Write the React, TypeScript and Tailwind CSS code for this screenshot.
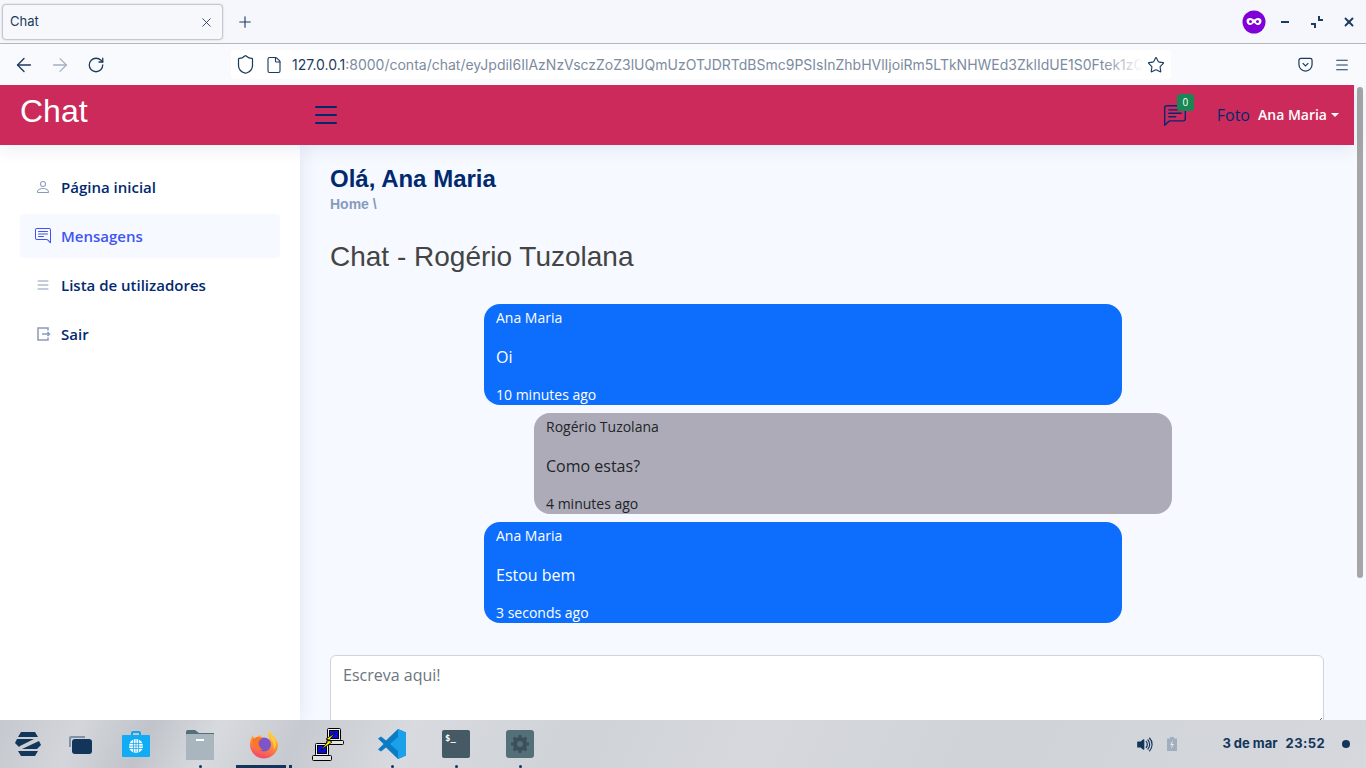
import { ArrowLeft, ArrowRight, RotateCw, Shield, File, Star, Menu, Plus, X } from "lucide-react";
import { BsPerson, BsChatRightText, BsChatLeftText, BsList, BsVolumeUpFill } from "react-icons/bs";
import type { ComponentType, ReactNode } from "react";

function SairIcon({ className, size }: { className?: string; size?: number }) {
  return (
    <svg className={className} width={size} height={size} viewBox="0 0 16 16" fill="none" stroke="currentColor" strokeWidth="1.500">
      <path d="M13 4.500V2H3v12h10v-2.500" />
      <path d="M7 8h7.500M12.500 6l2 2-2 2" />
    </svg>
  );
}

const sideItems: { label: string; icon: ComponentType<{ className?: string; size?: number }>; active?: boolean }[] = [
  { label: "Página inicial", icon: BsPerson },
  { label: "Mensagens", icon: BsChatRightText, active: true },
  { label: "Lista de utilizadores", icon: BsList },
  { label: "Sair", icon: SairIcon },
];

const messages = [
  { name: "Ana Maria", text: "Oi", time: "10 minutes ago", mine: true },
  { name: "Rogério Tuzolana", text: "Como estas?", time: "4 minutes ago", mine: false },
  { name: "Ana Maria", text: "Estou bem", time: "3 seconds ago", mine: true },
];

function BrowserChrome() {
  return (
    <div className="font-['Inter',sans-serif] text-[#1c3b5e]">
      <div className="flex h-[44px] items-start border-b border-[#b4b6ba] bg-[#f5f7fc] pl-[2px] pt-[4px]">
        <div className="flex h-[36px] w-[221px] items-center justify-between rounded-[4px] border border-[#c6c8cd] bg-[#f6f8fc] pl-[7px] pr-[8px] shadow-[0_0_2px_rgba(0,0,0,0.2)]">
          <span className="text-[13px]">Chat</span>
          <X size={15} strokeWidth={1.4} />
        </div>
        <div className="ml-[13px] flex h-[36px] items-center">
          <Plus size={18} strokeWidth={1.5} />
        </div>
        <div className="ml-auto flex h-[36px] items-center pr-[10px]">
          <svg width="24" height="24" viewBox="0 0 24 24">
            <circle cx="12" cy="12" r="11.500" fill="#8000d7" />
            <path d="M4.500 11c0-2 1.500-3 3.500-3 2 0 3 1.500 4 1.500S14 8 16 8s3.500 1 3.500 3-1.500 4-3.500 4-3-2-4-2-2 2-4 2-3.500-2-3.500-4z" fill="#fff" />
            <circle cx="8.500" cy="11.500" r="1.500" fill="#8000d7" />
            <circle cx="15.500" cy="11.500" r="1.500" fill="#8000d7" />
          </svg>
          <div className="ml-[15px] h-[2px] w-[8px] bg-[#1c3b5e]" />
          <svg className="ml-[21px]" width="14" height="14" viewBox="0 0 14 14" fill="none" stroke="#1c3b5e" strokeWidth="2">
            <path d="M1 9h4v4M13 5H9V1" />
          </svg>
          <X className="ml-[18px]" size={14} strokeWidth={3.2} />
        </div>
      </div>
      <div className="flex h-[41px] items-center bg-[#f9fafe]">
        <div className="flex w-[231px] items-center pl-[13px]">
          <ArrowLeft size={22} strokeWidth={1.5} />
          <ArrowRight className="ml-[14px] text-[#a3b1c2]" size={22} strokeWidth={1.4} />
          <RotateCw className="ml-[16px]" size={18} strokeWidth={1.7} />
        </div>
        <div className="flex h-[29px] w-[940px] items-center rounded-[4px] bg-white pl-[4px] pr-[6px]">
          <Shield size={21} strokeWidth={1.4} />
          <File className="ml-[9px]" size={18} strokeWidth={1.5} />
          <div className="relative ml-[9px] min-w-0 flex-1 overflow-hidden whitespace-nowrap text-[14px]">
            <span>127.0.0.1</span>
            <span className="text-[#7c8ba0]">:8000/conta/chat/eyJpdiI6IlAzNzVsczZoZ3lUQmUzOTJDRTdBSmc9PSIsInZhbHVlIjoiRm5LTkNHWEd3ZklIdUE1S0Ftek1zQ</span>
            <div className="absolute inset-y-0 right-0 w-[40px] bg-gradient-to-r from-transparent to-white" />
          </div>
          <Star className="ml-[4px]" size={18} strokeWidth={1.5} />
        </div>
        <div className="ml-auto flex items-center pr-[16px]">
          <svg width="15" height="15" viewBox="0 0 16 16" fill="none" stroke="#1c3b5e" strokeWidth="1.300">
            <path d="M1 3.500a2 2 0 0 1 2-2h10a2 2 0 0 1 2 2V8A7 7 0 0 1 1 8z" />
            <path d="M5 6.500l3 3 3-3" />
          </svg>
          <Menu className="ml-[21px]" size={16} strokeWidth={1.6} />
        </div>
      </div>
    </div>
  );
}

function TopBar() {
  return (
    <header className="relative z-10 flex h-[60px] items-center bg-[#cb2a5b] font-['Open_Sans',sans-serif] shadow-[0_2px_20px_rgba(1,41,112,0.1)]">
      <div className="mb-[9px] w-[310px] pl-[20px] font-['Liberation_Sans',sans-serif] text-[32px] text-white">Chat</div>
      <BsList className="text-[#012970]" size={32} />
      <div className="ml-auto flex items-center pr-[15px]">
        <div className="relative mr-[31px] mt-[2px]">
          <BsChatLeftText className="text-[#012970]" size={22} />
          <span className="absolute -right-[8px] -top-[11px] flex h-[17px] w-[17px] items-center justify-center rounded-[3px] bg-[#198754] text-[10px] text-white">0</span>
        </div>
        <span className="-mt-[1px] text-[16px] text-[#012970]">Foto</span>
        <span className="-mt-[1px] ml-[8px] text-[14px] font-semibold text-white">Ana Maria</span>
        <span className="ml-[4px] h-0 w-0 border-x-[4px] border-t-[4px] border-x-transparent border-t-white" />
      </div>
    </header>
  );
}

function Sidebar() {
  return (
    <aside className="relative z-[5] flex w-[300px] shrink-0 flex-col gap-[5px] bg-white px-[20px] pt-[20px] font-['Open_Sans',sans-serif] shadow-[0_0_20px_rgba(1,41,112,0.1)]">
      {sideItems.map((item) => {
        const Icon = item.icon;
        return (
          <div
            key={item.label}
            className={`flex h-[44px] items-center rounded-[4px] pl-[15px] text-[15px] font-semibold ${
              item.active ? "bg-[#f6f9ff] text-[#4154f1]" : "text-[#012970]"
            }`}
          >
            <span className="flex w-[26px]">
              <Icon className={item.active ? "text-[#4154f1]" : "text-[#899bbd]"} size={16} />
            </span>
            {item.label}
          </div>
        );
      })}
    </aside>
  );
}

function Bubble({ name, text, time, mine }: { name: string; text: string; time: string; mine: boolean }) {
  return (
    <div
      className={`w-[638px] rounded-[16px] px-[12px] pt-[3px] ${
        mine ? "ml-[154px] bg-[#0d6efd] text-white" : "ml-[204px] bg-[#adabb8] text-[#212529]"
      }`}
    >
      <div className="text-[14px] leading-[21px]">{name}</div>
      <div className="mt-[17px] text-[16px] leading-[24px]">{text}</div>
      <div className="mt-[15px] text-[14px] leading-[21px]">{time}</div>
    </div>
  );
}

function Main() {
  return (
    <main className="min-w-0 flex-1 bg-[#f6f9ff] pl-[30px] pr-[30px] pt-[20px] font-['Open_Sans',sans-serif]">
      <h1 className="font-['Liberation_Sans',sans-serif] text-[24px] font-bold leading-[28px] text-[#012970]">Olá, Ana Maria</h1>
      <div className="mt-[1px] font-['Liberation_Sans',sans-serif] text-[14px] font-bold leading-[21px] text-[#899bbd]">Home \</div>
      <h2 className="mt-[25px] font-['Liberation_Sans',sans-serif] text-[28px] leading-[34px] text-[#444444]">Chat - Rogério Tuzolana</h2>
      <div className="mt-[30px] flex flex-col gap-[8px]">
        {messages.map((m, i) => (
          <Bubble key={i} {...m} />
        ))}
      </div>
      <textarea
        className="mt-[32px] block h-[72px] w-full rounded-[6px] border border-[#ced4da] bg-white px-[12px] pb-[6px] pt-[7px] text-[16px] leading-[24px] placeholder:text-[#6c757d]"
        placeholder="Escreva aqui!"
      />
    </main>
  );
}

function Slot({ children, dot, bar }: { children: ReactNode; dot?: boolean; bar?: boolean }) {
  return (
    <div className="relative flex h-[48px] w-[64px] items-center justify-center">
      {children}
      {dot && <span className="absolute bottom-0 left-[31px] h-[3px] w-[3px] rounded-full bg-[#12355b]" />}
      {bar && (
        <>
          <span className="absolute bottom-0 left-[4px] h-[3px] w-[50px] bg-[#12355b]" />
          <span className="absolute bottom-0 left-[57px] h-[3px] w-[3px] bg-[#12355b]" />
        </>
      )}
    </div>
  );
}

function Taskbar() {
  return (
    <footer className="relative z-20 flex h-[48px] shrink-0 items-center overflow-hidden bg-[#d1d4d9] bg-[linear-gradient(115deg,rgba(196,199,205,0.9)_0%,rgba(212,214,219,0.7)_6%,rgba(188,192,198,0.8)_11%,rgba(218,220,224,0.7)_16%,rgba(194,198,204,0.7)_22%,rgba(220,222,226,0.6)_30%,rgba(206,209,214,0.5)_42%,rgba(218,220,224,0.5)_55%,rgba(206,209,214,0.4)_72%,rgba(216,218,222,0.6)_100%)] font-['Inter',sans-serif] text-[#12355b]">
      <div className="flex w-[56px] items-center justify-center">
        <svg width="28" height="24" viewBox="0 0 28 24" fill="#12355b">
          <path d="M7 0h14l3 5H4z" />
          <path d="M3 7h17L6 14l-1 1-4-4z" />
          <path d="M25 9l2 4-4 4H8l17-8z" />
          <path d="M4 19h20l-3 5H7z" />
        </svg>
      </div>
      <div className="flex w-[48px] items-center justify-center">
        <svg width="24" height="20" viewBox="0 0 24 20">
          <path d="M1 13V4a2 2 0 0 1 2-2h14v2H4a1 1 0 0 0-1 1v8z" fill="#7f93a8" />
          <rect x="4" y="5" width="20" height="15" rx="3" fill="#12355b" />
        </svg>
      </div>
      <Slot>
        <svg width="28" height="28" viewBox="0 0 28 28">
          <path d="M9 6V3a2 2 0 0 1 2-2h6a2 2 0 0 1 2 2v3h-2V3h-6v3z" fill="#0fa3ea" />
          <rect y="5" width="28" height="22" rx="1" fill="#12acf5" />
          <circle cx="14" cy="16" r="7" fill="#fff" />
          <path d="M7 13.500h14M7 16h14M7 18.500h14M11.500 9v14M14 9v14M16.500 9v14" stroke="#12acf5" strokeWidth="0.800" />
        </svg>
      </Slot>
      <Slot dot>
        <svg width="28" height="31" viewBox="0 0 28 31">
          <path d="M0 3a2 2 0 0 1 2-2h7l4 3h15v4H0z" fill="#546e7a" />
          <rect y="5" width="28" height="26" rx="1" fill="#a9b6bd" />
          <rect x="10" y="10" width="8" height="2" fill="#fff" />
        </svg>
      </Slot>
      <Slot bar>
        <svg width="28" height="30" viewBox="0 0 28 30">
          <defs>
            <linearGradient id="ff" x1="0.7" y1="0" x2="0.4" y2="1">
              <stop offset="0" stopColor="#ffe14a" />
              <stop offset="0.45" stopColor="#ff9a2e" />
              <stop offset="1" stopColor="#f4476b" />
            </linearGradient>
          </defs>
          <path d="M18 0c1 4 8 7 10 15a14 14 0 0 1-28 1C0 12 1 9 3 6c0 2 1 3 2 4 1-2 3-3 5-4l3 3c2 0 4 1 6 3 1-4-2-8-1-12z" fill="url(#ff)" />
          <circle cx="14" cy="15.500" r="7" fill="#7d55c9" />
          <path d="M2 11c3-3 7-4 10-2l-3 3c-1 3 0 7 4 9-5 1-10-3-11-10z" fill="#ff7528" />
          <path d="M20 3c3 3 6 7 6 12 0 2-1 4-2 6 0-5-1-9-4-12 1-2 1-4 0-6z" fill="#ffc93c" />
        </svg>
      </Slot>
      <Slot>
        <svg width="32" height="33" viewBox="0 0 32 33" stroke="#000" strokeWidth="1">
          <rect x="15.500" y="0.500" width="13" height="12" rx="1" fill="#f2f2f2" />
          <rect x="17.500" y="2.500" width="9" height="8" fill="#0b0bd6" />
          <rect x="14.500" y="12.500" width="17" height="4" rx="1" fill="#e2e2e2" />
          <rect x="3.500" y="15.500" width="13" height="12" rx="1" fill="#f2f2f2" />
          <rect x="5.500" y="17.500" width="9" height="8" fill="#0b0bd6" />
          <rect x="0.500" y="27.500" width="19" height="5" rx="1" fill="#e2e2e2" />
          <path d="M23 5l-9 6 3 1L9 22l11-8-3-1.500z" fill="#ffee00" strokeWidth="0.800" />
        </svg>
      </Slot>
      <Slot dot>
        <svg width="28" height="30" viewBox="0 0 28 30">
          <path d="M20 0l8 3.500v23L20 30 8 18.500l-5 4-3-2 5.500-5.500L0 9.500l3-2 5 4z" fill="#0a7cc4" />
          <path d="M20 0l8 3.500v23L20 30zM20 8l-8 7 8 7z" fill="#1ba1ea" fillRule="evenodd" />
        </svg>
      </Slot>
      <Slot dot>
        <div className="h-[28px] w-[28px] rounded-[2px] bg-[#455a64] pl-[3px] pt-[1px] font-['DejaVu_Sans_Mono',monospace] text-[9px] font-bold leading-[14px] text-white">$_</div>
      </Slot>
      <Slot dot>
        <div className="flex h-[28px] w-[28px] items-center justify-center rounded-[3px] bg-[#546e7a]">
          <svg width="20" height="20" viewBox="0 0 20 20">
            <circle cx="10" cy="10" r="5" fill="none" stroke="#3c505a" strokeWidth="4" />
            <path d="M10 1v18M1 10h18M3.600 3.600l12.800 12.800M16.400 3.600L3.600 16.400" stroke="#3c505a" strokeWidth="3" />
            <circle cx="10" cy="10" r="3" fill="#546e7a" />
          </svg>
        </div>
      </Slot>
      <div className="ml-auto flex items-center pr-[16px]">
        <BsVolumeUpFill size={19} />
        <svg className="ml-[12px]" width="10" height="14" viewBox="0 0 10 14">
          <path d="M3 0h4v1.500h3V14H0V1.500h3z" fill="#a1aebd" />
          <path d="M6 3L3 8h2l-1 4 3-5H5z" fill="#e4e6ea" />
        </svg>
        <span className="ml-[45px] text-[13px] font-bold">3 de mar</span>
        <span className="ml-[8px] text-[13px] font-bold tracking-[0.4px]">23:52</span>
        <span className="ml-[17px] h-[8px] w-[8px] rounded-full bg-[#12355b]" />
      </div>
    </footer>
  );
}

export default function App() {
  return (
    <div className="flex h-screen w-full flex-col overflow-hidden bg-[#f6f9ff]">
      <BrowserChrome />
      <div className="flex min-h-0 flex-1 overflow-hidden">
        <div className="flex min-w-0 flex-1 flex-col">
          <TopBar />
          <div className="flex min-h-0 flex-1">
            <Sidebar />
            <Main />
          </div>
        </div>
        <div className="w-[12px] shrink-0 pl-[3px] pr-[3px] pt-[2px]">
          <div className="h-[491px] rounded-full bg-[#a6a6a6]" />
        </div>
      </div>
      <Taskbar />
    </div>
  );
}
